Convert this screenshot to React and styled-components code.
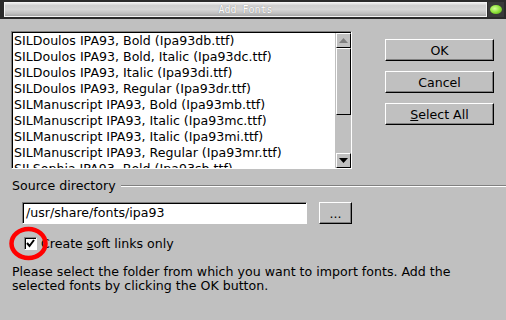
import React from "react";
import styled, { createGlobalStyle } from "styled-components";

const Global = createGlobalStyle`
  html, body { margin: 0; padding: 0; background: #c0c0c0; }
  body { font-family: "DejaVu Sans", "Liberation Sans", sans-serif; font-size: 12.6px; color: #000; }
  * { box-sizing: border-box; }
`;

const Window = styled.div`
  position: relative;
  width: 506px;
  height: 320px;
  background: #c0c0c0;
  display: flex;
  flex-direction: column;
  overflow: hidden;
`;

const TitleBar = styled.div`
  height: 19px;
  background: #2b2b2b;
  display: flex;
  align-items: flex-start;
  padding: 2px 2px 0 4px;
  gap: 1px;
`;

const TitleCaption = styled.div`
  flex: 1;
  height: 15px;
  background: linear-gradient(to bottom, #eeeeee 0%, #cfcfcf 20%, #d6d6d6 50%, #c0c0c0 80%, #a4a4a4 100%);
  border: 1px solid #f4f4f4;
  color: #fff;
  font-family: "DejaVu Sans Mono", monospace;
  font-size: 10px;
  line-height: 13px;
  text-align: center;
  text-shadow: 0 0 1px #777;
`;

const TitleButton = styled.div`
  width: 16px;
  height: 15px;
  background: #3a3a3a;
  display: flex;
  align-items: center;
  justify-content: center;
`;

const Led = styled.div`
  width: 12px;
  height: 9px;
  border-radius: 50%;
  background: radial-gradient(ellipse at 40% 40%, #d6ff9a 0%, #8ee23a 50%, #4fa012 100%);
`;

const Body = styled.div`
  flex: 1;
  display: flex;
  flex-direction: column;
  padding: 12px 0 0 11px;
`;

const TopRow = styled.div`
  display: flex;
  align-items: flex-start;
`;

const ListBox = styled.div`
  width: 341px;
  height: 138px;
  display: flex;
  border-top: 1px solid #808080;
  border-left: 1px solid #808080;
  border-bottom: 1px solid #ffffff;
  border-right: 1px solid #ffffff;
`;

const ListInner = styled.div`
  flex: 1;
  display: flex;
  border-top: 1px solid #000;
  border-left: 1px solid #000;
  overflow: hidden;
`;

const Items = styled.div`
  flex: 1;
  background: #fff;
  overflow: hidden;
`;

const Item = styled.div`
  height: 16px;
  line-height: 15px;
  padding-left: 1px;
  white-space: nowrap;
  font-size: 12.6px;
`;

const ScrollBar = styled.div`
  width: 16px;
  display: flex;
  flex-direction: column;
  background: #c0c0c0;
  border-left: 1px solid #c0c0c0;
`;

const Arrow = styled.div`
  height: 15px;
  width: 15px;
  background: #c0c0c0;
  border-top: 1px solid #fff;
  border-left: 1px solid #fff;
  border-right: 1px solid #000;
  border-bottom: 1px solid #000;
  display: flex;
  align-items: center;
  justify-content: center;
`;

const Trough = styled.div`
  flex: 1;
  display: flex;
  flex-direction: column;
`;

const Thumb = styled.div`
  height: 67px;
  width: 15px;
  background: #c0c0c0;
  border-top: 1px solid #fff;
  border-left: 1px solid #fff;
  border-right: 1px solid #000;
  border-bottom: 1px solid #000;
`;

const Buttons = styled.div`
  display: flex;
  flex-direction: column;
  gap: 10px;
  margin-left: 33px;
  margin-top: 8px;
`;

const Button = styled.div`
  width: ${(p) => p.$w || 109}px;
  height: 22px;
  background: #c0c0c0;
  border-top: 1px solid #fff;
  border-left: 1px solid #fff;
  border-right: 1px solid #000;
  border-bottom: 1px solid #000;
  box-shadow: inset -1px -1px 0 #808080;
  display: flex;
  align-items: center;
  justify-content: center;
  font-size: 12.6px;
`;

const U = styled.span`
  text-decoration: underline;
`;

const GroupHeader = styled.div`
  display: flex;
  align-items: center;
  margin-top: 9px;
  padding-left: 1px;
  height: 15px;
`;

const GroupLabel = styled.span`
  font-size: 12.6px;
  white-space: nowrap;
`;

const Groove = styled.div`
  flex: 1;
  margin-left: 5px;
  height: 2px;
  border-top: 1px solid #808080;
  border-bottom: 1px solid #fff;
`;

const PathRow = styled.div`
  display: flex;
  align-items: center;
  margin-top: 9px;
  margin-left: 11px;
  gap: 12px;
`;

const TextInput = styled.div`
  width: 285px;
  height: 22px;
  background: #fff;
  border-top: 1px solid #808080;
  border-left: 1px solid #808080;
  border-bottom: 1px solid #fff;
  border-right: 1px solid #fff;
  box-shadow: inset 1px 1px 0 #000;
  padding-left: 3px;
  line-height: 19px;
  font-size: 12.6px;
  white-space: nowrap;
`;

const CheckRow = styled.div`
  display: flex;
  align-items: center;
  margin-top: 13px;
  margin-left: 13px;
  gap: 4px;
  height: 13px;
  white-space: nowrap;
  font-size: 12.6px;
`;

const CheckBox = styled.div`
  width: 13px;
  height: 13px;
  flex: none;
  background: #fff;
  border-top: 1px solid #808080;
  border-left: 1px solid #808080;
  border-bottom: 1px solid #fff;
  border-right: 1px solid #fff;
  box-shadow: inset 1px 1px 0 #000;
  display: flex;
  align-items: center;
  justify-content: center;
`;

const Description = styled.p`
  margin: 15px 0 0 1px;
  font-size: 12.6px;
  line-height: 14px;
  width: 480px;
`;

const Annotation = styled.svg`
  position: absolute;
  left: 8px;
  top: 226px;
  pointer-events: none;
`;

const items = [
  "SILDoulos IPA93, Bold (Ipa93db.ttf)",
  "SILDoulos IPA93, Bold, Italic (Ipa93dc.ttf)",
  "SILDoulos IPA93, Italic (Ipa93di.ttf)",
  "SILDoulos IPA93, Regular (Ipa93dr.ttf)",
  "SILManuscript IPA93, Bold (Ipa93mb.ttf)",
  "SILManuscript IPA93, Italic (Ipa93mc.ttf)",
  "SILManuscript IPA93, Italic (Ipa93mi.ttf)",
  "SILManuscript IPA93, Regular (Ipa93mr.ttf)",
  "SILSophia IPA93, Bold (Ipa93sb.ttf)",
];

export default function App() {
  return (
    <Window>
      <Global />
      <TitleBar>
        <TitleCaption>Add Fonts</TitleCaption>
        <TitleButton>
          <Led />
        </TitleButton>
      </TitleBar>
      <Body>
        <TopRow>
          <ListBox>
            <ListInner>
              <Items>
                {items.map((t) => (
                  <Item key={t}>{t}</Item>
                ))}
              </Items>
              <ScrollBar>
                <Arrow>
                  <svg width="9" height="5" viewBox="0 0 9 5">
                    <path d="M0 5 L4.5 0 L9 5 Z" fill="#808080" />
                  </svg>
                </Arrow>
                <Trough>
                  <Thumb />
                </Trough>
                <Arrow>
                  <svg width="9" height="5" viewBox="0 0 9 5">
                    <path d="M0 0 L9 0 L4.5 5 Z" fill="#000" />
                  </svg>
                </Arrow>
              </ScrollBar>
            </ListInner>
          </ListBox>
          <Buttons>
            <Button>OK</Button>
            <Button>Cancel</Button>
            <Button>
              <span>
                <U>S</U>elect All
              </span>
            </Button>
          </Buttons>
        </TopRow>
        <GroupHeader>
          <GroupLabel>Source directory</GroupLabel>
          <Groove />
        </GroupHeader>
        <PathRow>
          <TextInput>/usr/share/fonts/ipa93</TextInput>
          <Button $w={33}>...</Button>
        </PathRow>
        <CheckRow>
          <CheckBox>
            <svg width="9" height="9" viewBox="0 0 9 9">
              <path d="M1 4 L3.5 7 L8 1" stroke="#000" strokeWidth="2" fill="none" />
            </svg>
          </CheckBox>
          <span>
            Create <U>s</U>oft links only
          </span>
        </CheckRow>
        <Description>
          Please select the folder from which you want to import fonts. Add the selected fonts by
          clicking the OK button.
        </Description>
      </Body>
      <Annotation width="44" height="36" viewBox="0 0 44 36">
        <ellipse cx="20.5" cy="17.5" rx="17" ry="14.5" stroke="#ff0000" strokeWidth="4.5" fill="none" />
      </Annotation>
    </Window>
  );
}
